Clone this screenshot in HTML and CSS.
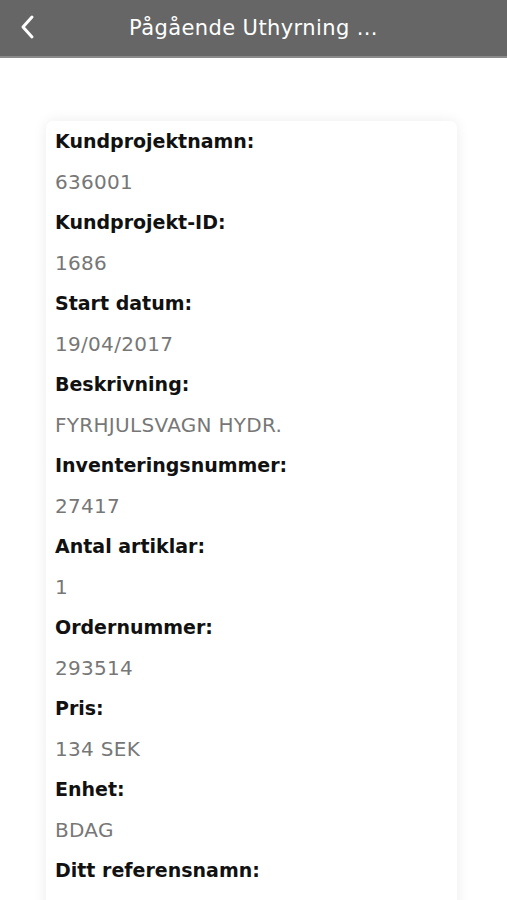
FILE: index.html
```html
<!DOCTYPE html>
<html lang="sv">
<head>
<meta charset="utf-8">
<title>Pågående Uthyrning</title>
<link rel="stylesheet" href="styles.css">
</head>
<body>
<header class="topbar">
  <button class="back" aria-label="Tillbaka">
    <svg width="16" height="26" viewBox="0 0 16 26"><path d="M12 3 L3 13 L12 23" fill="none" stroke="#fff" stroke-width="3" stroke-linecap="round" stroke-linejoin="round"/></svg>
  </button>
  <h1 class="title">Pågående Uthyrning ...</h1>
</header>
<main class="content">
  <section class="card">
    <div class="label">Kundprojektnamn:</div>
    <div class="value">636001</div>
    <div class="label">Kundprojekt-ID:</div>
    <div class="value">1686</div>
    <div class="label">Start datum:</div>
    <div class="value">19/04/2017</div>
    <div class="label">Beskrivning:</div>
    <div class="value">FYRHJULSVAGN HYDR.</div>
    <div class="label">Inventeringsnummer:</div>
    <div class="value">27417</div>
    <div class="label">Antal artiklar:</div>
    <div class="value">1</div>
    <div class="label">Ordernummer:</div>
    <div class="value">293514</div>
    <div class="label">Pris:</div>
    <div class="value">134 SEK</div>
    <div class="label">Enhet:</div>
    <div class="value">BDAG</div>
    <div class="label">Ditt referensnamn:</div>
    <div class="value">&nbsp;</div>
  </section>
</main>
</body>
</html>
```
FILE: styles.css
```css
html, body { margin: 0; padding: 0; background: #fff; }
body { font-family: "DejaVu Sans", Inter, sans-serif; height: 900px; overflow: hidden; }
.topbar {
  height: 56px;
  background: #666;
  border-bottom: 2px solid #8a8a8a;
  display: flex;
  align-items: center;
  justify-content: center;
  position: relative;
}
.back {
  position: absolute;
  left: 20px;
  top: 14px;
  background: none;
  border: 0;
  padding: 0;
  display: flex;
}
.title {
  margin: 0;
  color: #fff;
  font-weight: 400;
  font-size: 21px;
  letter-spacing: 0.4px;
}
.content { padding: 63px 50px 0 46px; }
.card {
  background: #fff;
  border-radius: 7px;
  box-shadow: 0 0 14px rgba(0,0,0,0.08);
  padding: 0 9px 20px;
}
.label {
  font-weight: 700;
  font-size: 19px;
  color: #111;
  line-height: 40.5px;
}
.value {
  font-size: 20px;
  letter-spacing: 0.3px;
  color: #777;
  line-height: 40.5px;
}
```
